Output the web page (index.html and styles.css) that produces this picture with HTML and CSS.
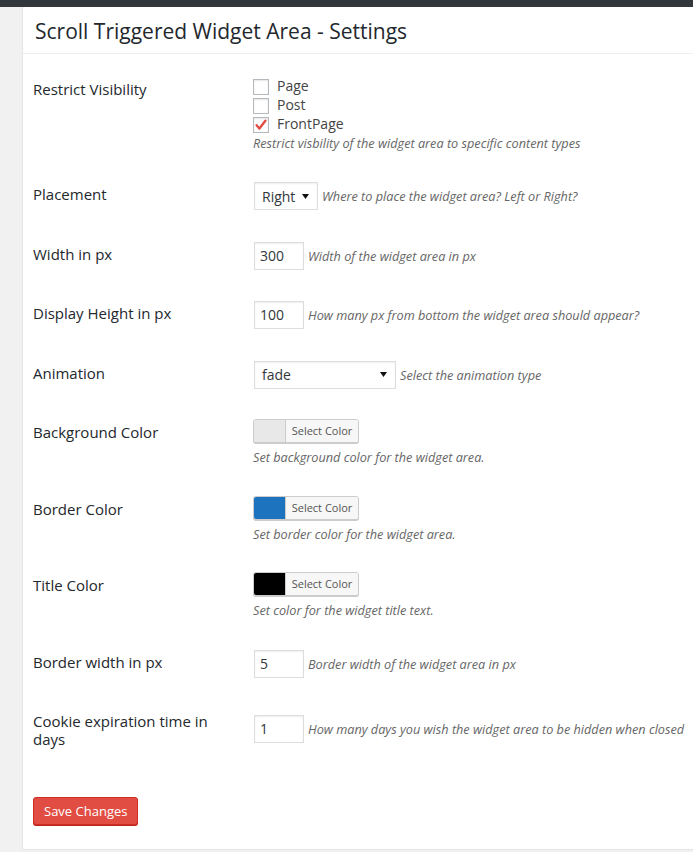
FILE: index.html
```html
<!DOCTYPE html>
<html lang="en">
<head>
<meta charset="utf-8">
<title>Scroll Triggered Widget Area - Settings</title>
<link rel="stylesheet" href="styles.css">
</head>
<body>
<div class="topbar"></div>
<div class="panel">
  <div class="panel-header">
    <h2 class="panel-title">Scroll Triggered Widget Area - Settings</h2>
  </div>
  <form class="settings">
    <div class="row">
      <div class="label">Restrict Visibility</div>
      <div class="control control-checks">
        <label class="check"><span class="box"></span>Page</label>
        <label class="check"><span class="box"></span>Post</label>
        <label class="check"><span class="box"><svg class="tick" width="14" height="14" viewBox="0 0 14 14"><path d="M2.6 7.2 L5.4 10.6 L11.4 2.8" fill="none" stroke="#e14d43" stroke-width="2.4" stroke-linecap="round" stroke-linejoin="round"/></svg></span>FrontPage</label>
        <div class="desc">Restrict visbility of the widget area to specific content types</div>
      </div>
    </div>

    <div class="row">
      <div class="label">Placement</div>
      <div class="control inline">
        <span class="select select-small"><span class="select-value">Right</span><svg class="arrow" width="7" height="5" viewBox="0 0 7 5"><path d="M0 0 H7 L3.5 5 Z" fill="#111"/></svg></span>
        <span class="desc">Where to place the widget area? Left or Right?</span>
      </div>
    </div>

    <div class="row">
      <div class="label">Width in px</div>
      <div class="control inline">
        <span class="input">300</span>
        <span class="desc">Width of the widget area in px</span>
      </div>
    </div>

    <div class="row">
      <div class="label">Display Height in px</div>
      <div class="control inline">
        <span class="input">100</span>
        <span class="desc">How many px from bottom the widget area should appear?</span>
      </div>
    </div>

    <div class="row">
      <div class="label">Animation</div>
      <div class="control inline">
        <span class="select select-wide"><span class="select-value">fade</span><svg class="arrow" width="7" height="5" viewBox="0 0 7 5"><path d="M0 0 H7 L3.5 5 Z" fill="#111"/></svg></span>
        <span class="desc">Select the animation type</span>
      </div>
    </div>

    <div class="row row-color">
      <div class="label">Background Color</div>
      <div class="control control-color">
        <span class="color-btn"><span class="swatch swatch-light"></span><span class="color-text">Select Color</span></span>
        <div class="desc">Set background color for the widget area.</div>
      </div>
    </div>

    <div class="row row-color">
      <div class="label">Border Color</div>
      <div class="control control-color">
        <span class="color-btn"><span class="swatch swatch-blue"></span><span class="color-text">Select Color</span></span>
        <div class="desc">Set border color for the widget area.</div>
      </div>
    </div>

    <div class="row row-color">
      <div class="label">Title Color</div>
      <div class="control control-color">
        <span class="color-btn"><span class="swatch swatch-black"></span><span class="color-text">Select Color</span></span>
        <div class="desc">Set color for the widget title text.</div>
      </div>
    </div>

    <div class="row">
      <div class="label">Border width in px</div>
      <div class="control inline">
        <span class="input">5</span>
        <span class="desc">Border width of the widget area in px</span>
      </div>
    </div>

    <div class="row">
      <div class="label">Cookie expiration time in days</div>
      <div class="control inline control-mid">
        <span class="input">1</span>
        <span class="desc">How many days you wish the widget area to be hidden when closed</span>
      </div>
    </div>

    <div class="submit">
      <button type="button" class="btn-primary">Save Changes</button>
    </div>
  </form>
</div>
</body>
</html>
```

FILE: styles.css
```css
html, body {
  margin: 0;
  padding: 0;
}
body {
  background: #f1f1f1;
  font-family: "Open Sans", "Noto Sans", sans-serif;
  color: #444;
  overflow: hidden;
  height: 852px;
}
.topbar {
  height: 7px;
  background: #32373c;
}
.panel {
  margin-left: 22px;
  background: #fff;
  border-left: 1px solid #e5e5e5;
  border-bottom: 1px solid #e5e5e5;
  height: 842px;
  overflow: hidden;
}
.panel-header {
  height: 46px;
  border-bottom: 1px solid #eee;
  display: flex;
  align-items: center;
  padding: 0 12px;
}
.panel-title {
  margin: 0;
  font-size: 21px;
  font-weight: 400;
  color: #23282d;
  line-height: 1;
  white-space: nowrap;
  padding-top: 2px;
}
.settings {
  padding: 5.5px 0 0 10px;
}
.row {
  display: grid;
  grid-template-columns: 220px 1fr;
  align-items: start;
}
.label {
  padding: 20.5px 20px 20px 0;
  font-size: 15px;
  font-weight: 400;
  line-height: 18px;
  color: #23282d;
}
.control {
  padding: 17.5px 0 14px;
  font-size: 14px;
}
.inline {
  display: flex;
  align-items: center;
  white-space: nowrap;
}
.control-mid {
  padding-top: 23px;
}
.control-checks {
  padding: 16px 0 13px;
}
.check {
  display: flex;
  align-items: center;
  height: 19px;
  line-height: 19px;
  color: #444;
  font-size: 14px;
}
.box {
  box-sizing: border-box;
  width: 16px;
  height: 16px;
  border: 1px solid #b4b9be;
  background: #fff;
  box-shadow: inset 0 1px 2px rgba(0, 0, 0, 0.1);
  margin: 3px 8px 0 0;
  display: flex;
  align-items: center;
  justify-content: center;
}
.tick {
  display: block;
}
.desc {
  font-size: 12.7px;
  font-style: italic;
  color: #666;
  line-height: 18px;
  white-space: nowrap;
}
.control-checks .desc {
  padding-top: 1px;
}
.inline .desc {
  margin-left: 4px;
}
.select {
  box-sizing: border-box;
  height: 28px;
  margin-left: 1px;
  border: 1px solid #ddd;
  box-shadow: inset 0 1px 2px rgba(0, 0, 0, 0.07);
  background: #fff;
  display: inline-flex;
  align-items: center;
  justify-content: space-between;
  padding: 0 8px 0 7px;
  color: #32373c;
  font-size: 14px;
}
.select-small {
  width: 64px;
}
.select-wide {
  width: 142px;
}
.select-value {
  line-height: 26px;
  padding-top: 1px;
}
.arrow {
  display: block;
}
.input {
  box-sizing: border-box;
  width: 50px;
  height: 28px;
  margin-left: 1px;
  border: 1px solid #ddd;
  box-shadow: inset 0 1px 2px rgba(0, 0, 0, 0.07);
  background: #fff;
  padding: 0 5px;
  line-height: 26px;
  color: #32373c;
  font-size: 14px;
}
.control-color {
  padding: 16.5px 0 13px;
}
.color-btn {
  box-sizing: border-box;
  display: flex;
  width: 106px;
  height: 24px;
  border: 1px solid #ccc;
  border-radius: 3px;
  box-shadow: 0 1px 0 #ccc;
  overflow: hidden;
  margin-bottom: 5px;
  background: #f7f7f7;
}
.swatch {
  width: 31px;
  flex: none;
}
.swatch-light { background: #e8e8e8; }
.swatch-blue { background: #1e73be; }
.swatch-black { background: #000; }
.color-text {
  flex: 1;
  border-left: 1px solid #ccc;
  background: #f7f7f7;
  font-size: 11px;
  line-height: 22px;
  color: #555;
  text-align: center;
}
.submit {
  padding: 29px 0 10px;
}
.btn-primary {
  box-sizing: border-box;
  height: 28px;
  padding: 0 10px;
  border: 1px solid #d02c21;
  border-radius: 3px;
  background: #e14d43;
  box-shadow: 0 1px 0 #ba281e;
  color: #fff;
  font-family: "Open Sans", "Noto Sans", sans-serif;
  font-size: 13px;
  line-height: 26px;
  cursor: pointer;
}
```
